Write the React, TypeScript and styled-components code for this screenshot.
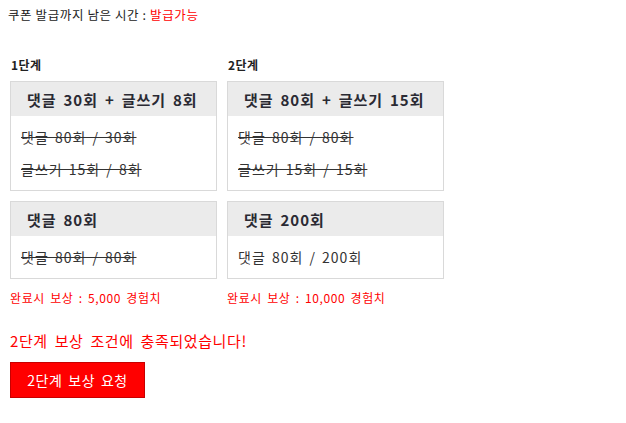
import React from "react";
import styled, { createGlobalStyle } from "styled-components";

const Global = createGlobalStyle`
  html, body { margin: 0; padding: 0; background: #fff; }
  body { font-family: "Noto Sans CJK KR", "Noto Sans", sans-serif; color: #333; }
`;

const Page = styled.div`
  padding: 6px 8px 0 8px;
`;

const TopLine = styled.div`
  font-size: 12.5px;
  line-height: 18px;
  color: #222;
  letter-spacing: 0.6px;
`;

const Red = styled.span`
  color: #ff0000;
`;

const Stages = styled.div`
  display: flex;
  gap: 10px;
  margin: 33px 0 0 2px;
`;

const Column = styled.div<{ $w: number }>`
  width: ${(p) => p.$w}px;
  display: flex;
  flex-direction: column;
`;

const StageLabel = styled.div`
  font-size: 12px;
  font-weight: 700;
  line-height: 16px;
  color: #222;
  letter-spacing: 0.5px;
  margin: 0 0 8px 1px;
`;

const Box = styled.div`
  border: 1px solid #d9d9d9;
  margin-bottom: 10px;
`;

const BoxHeader = styled.div`
  background: #ebebeb;
  height: 34px;
  display: flex;
  align-items: center;
  padding-left: 16px;
  font-size: 15px;
  font-weight: 700;
  color: #2a2a33;
  letter-spacing: 1px;
  word-spacing: 2.5px;
  white-space: nowrap;
`;

const BoxBody = styled.div`
  padding: 5px 10px;
`;

const Line = styled.div<{ $done: boolean }>`
  height: 32px;
  display: flex;
  align-items: center;
  font-size: 14px;
  color: #333;
  letter-spacing: 1px;
  word-spacing: 2px;
  white-space: nowrap;
  text-decoration: ${(p) => (p.$done ? "line-through" : "none")};
`;

const Reward = styled.div`
  color: #ff0000;
  font-size: 12px;
  line-height: 16px;
  margin-top: 1px;
  letter-spacing: 0.6px;
  word-spacing: 2px;
  white-space: nowrap;
`;

const Message = styled.div`
  color: #ff0000;
  font-size: 15px;
  line-height: 18px;
  margin: 26px 0 0 2px;
  letter-spacing: 0.6px;
  word-spacing: 3px;
`;

const RequestButton = styled.button`
  margin: 12px 0 0 2px;
  width: 135px;
  height: 36px;
  background: #ff0000;
  border: 1px solid #c80000;
  color: #fff;
  font-family: "Noto Sans CJK KR", "Noto Sans", sans-serif;
  font-size: 14px;
  letter-spacing: 0.6px;
  word-spacing: 2px;
  cursor: pointer;
  padding: 0;
`;

type Task = { title: string; lines: { text: string; done: boolean }[] };
type Stage = { label: string; width: number; tasks: Task[]; reward: string };

const stages: Stage[] = [
  {
    label: "1단계",
    width: 207,
    tasks: [
      {
        title: "댓글 30회 + 글쓰기 8회",
        lines: [
          { text: "댓글 80회 / 30회", done: true },
          { text: "글쓰기 15회 / 8회", done: true },
        ],
      },
      { title: "댓글 80회", lines: [{ text: "댓글 80회 / 80회", done: true }] },
    ],
    reward: "완료시 보상 : 5,000 경험치",
  },
  {
    label: "2단계",
    width: 217,
    tasks: [
      {
        title: "댓글 80회 + 글쓰기 15회",
        lines: [
          { text: "댓글 80회 / 80회", done: true },
          { text: "글쓰기 15회 / 15회", done: true },
        ],
      },
      { title: "댓글 200회", lines: [{ text: "댓글 80회 / 200회", done: false }] },
    ],
    reward: "완료시 보상 : 10,000 경험치",
  },
];

export default function App() {
  return (
    <Page>
      <Global />
      <TopLine>
        쿠폰 발급까지 남은 시간 : <Red>발급가능</Red>
      </TopLine>
      <Stages>
        {stages.map((s) => (
          <Column key={s.label} $w={s.width}>
            <StageLabel>{s.label}</StageLabel>
            {s.tasks.map((t) => (
              <Box key={t.title}>
                <BoxHeader>{t.title}</BoxHeader>
                <BoxBody>
                  {t.lines.map((l) => (
                    <Line key={l.text} $done={l.done}>
                      {l.text}
                    </Line>
                  ))}
                </BoxBody>
              </Box>
            ))}
            <Reward>{s.reward}</Reward>
          </Column>
        ))}
      </Stages>
      <Message>2단계 보상 조건에 충족되었습니다!</Message>
      <RequestButton>2단계 보상 요청</RequestButton>
    </Page>
  );
}
